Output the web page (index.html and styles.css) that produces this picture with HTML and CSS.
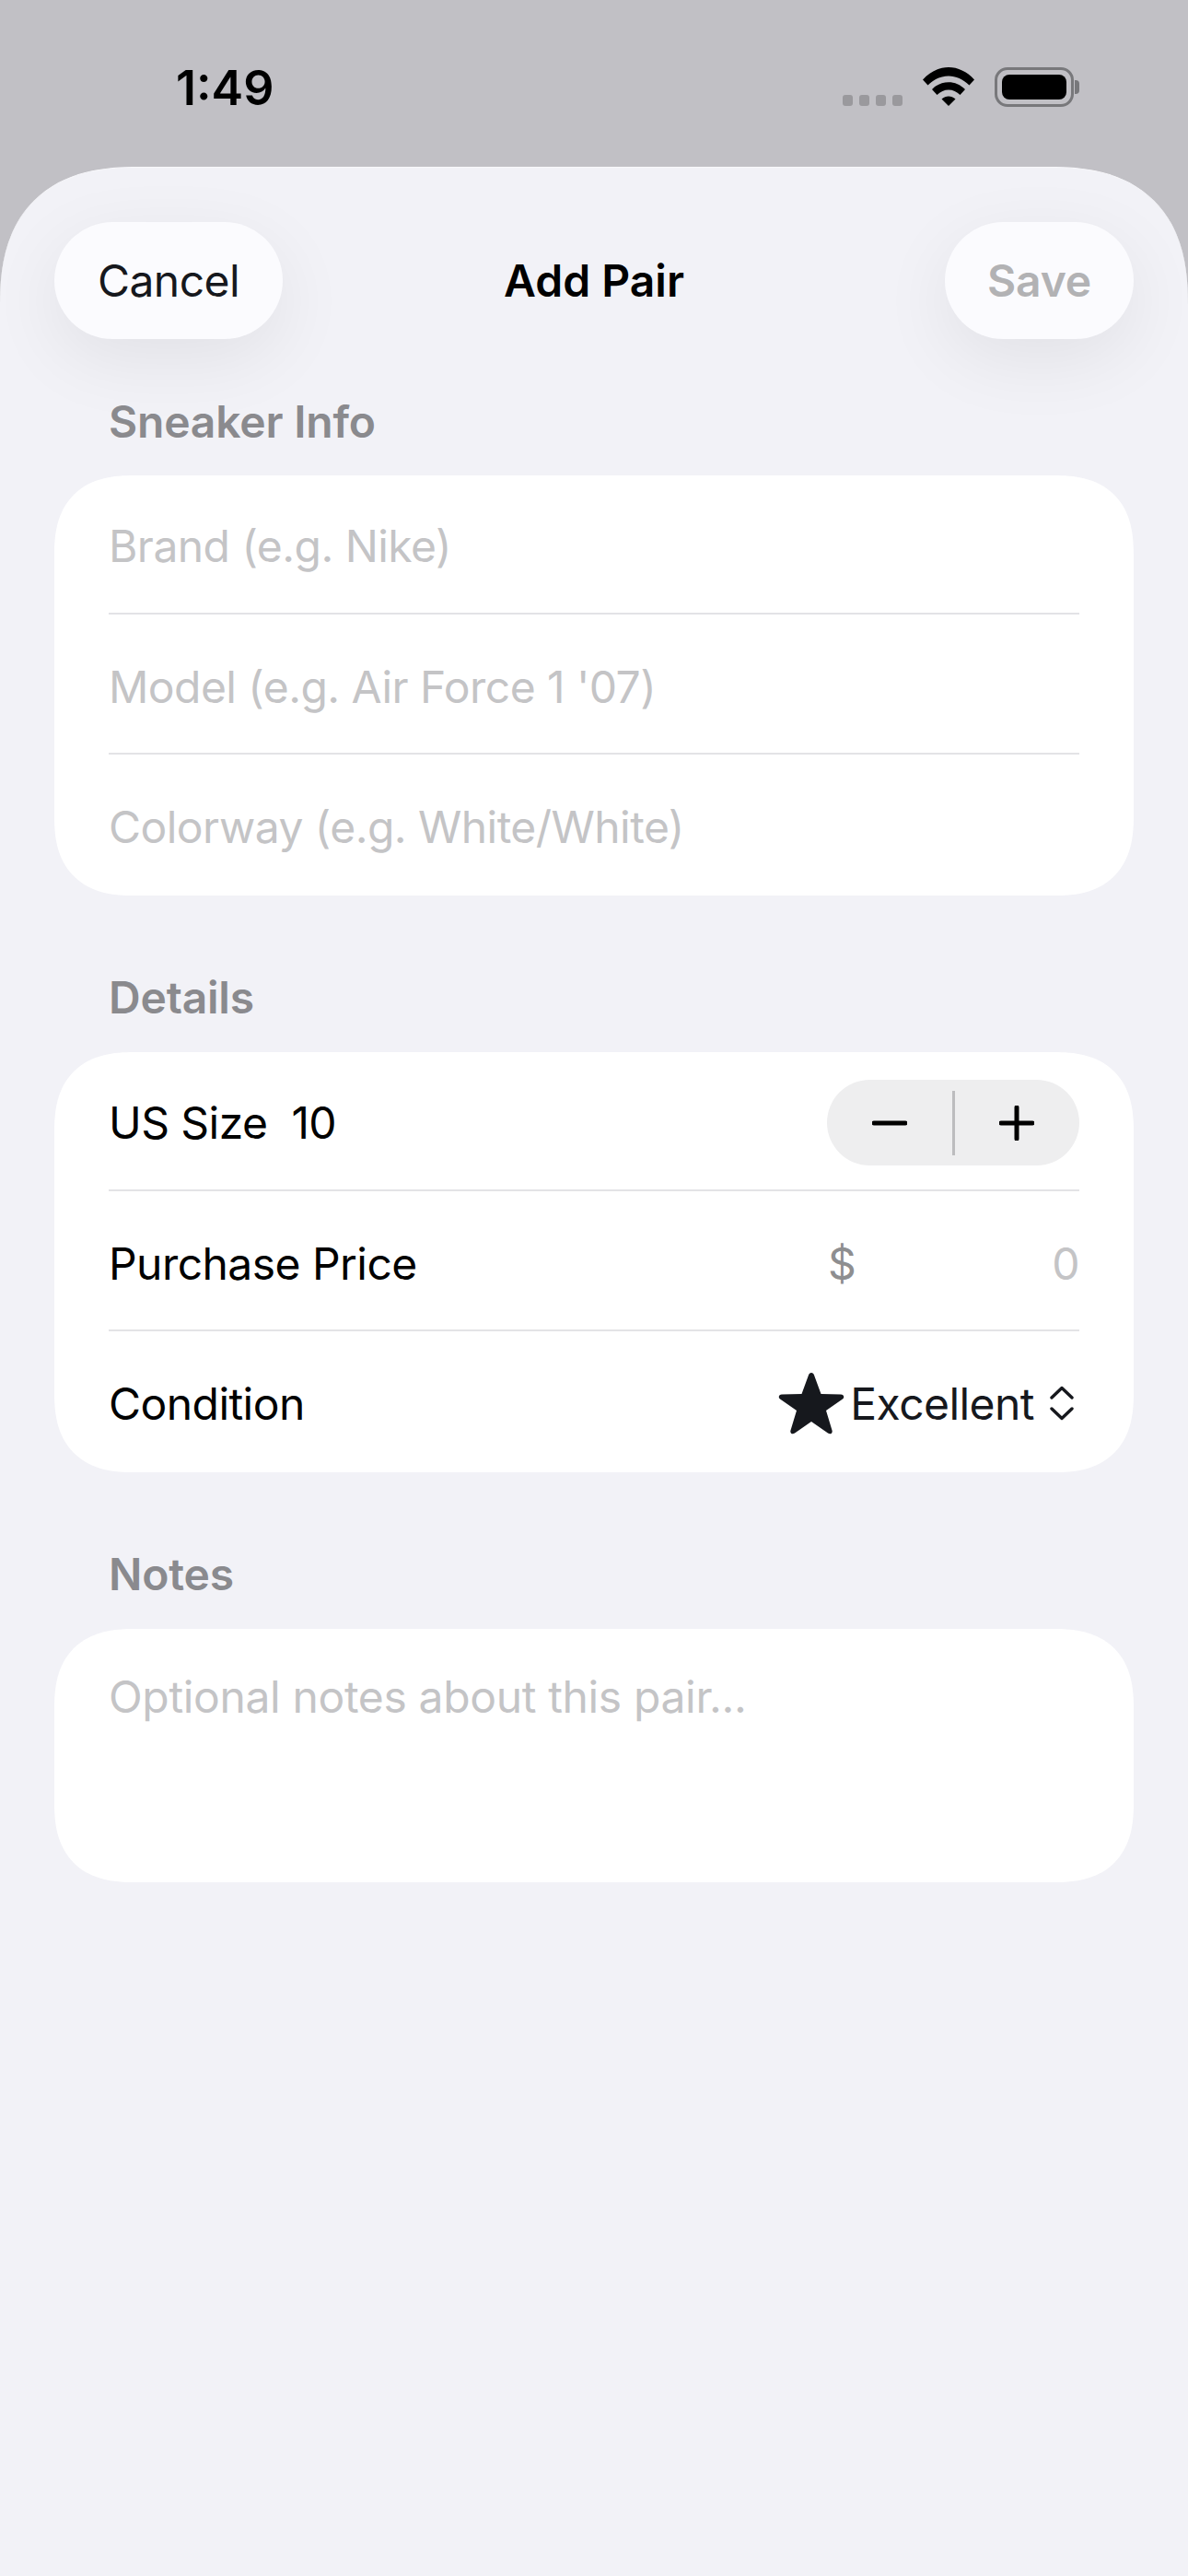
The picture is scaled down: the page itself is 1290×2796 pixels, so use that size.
FILE: index.html
```html
<!DOCTYPE html>
<html lang="en">
<head>
    <meta charset="UTF-8">
    <meta name="viewport" content="width=device-width, initial-scale=1.0">
    <title>Add Pair</title>
    <link rel="stylesheet" href="styles.css">
</head>
<body>
    <!-- Status bar -->
    <div class="status-bar">
        <span class="time">1:49</span>
        <div class="status-icons">
            <div class="signal"><i></i><i></i><i></i><i></i></div>
            <svg class="wifi" width="56" height="42" viewBox="0 0 56 42">
                <path d="M0 13.5 C16 -4.5 40 -4.5 56 13.5 L50.5 19.5 C37 6 19 6 5.500 19.500 Z" fill="#000"/>
                <path d="M10 24 C20 13.500 36 13.500 46 24 L40.500 30 C33.500 22.500 22.500 22.500 15.500 30 Z" fill="#000"/>
                <path d="M20.500 34.500 C25 30.500 31 30.500 35.500 34.500 L28 42 Z" fill="#000"/>
            </svg>
            <div class="battery"><div class="battery-body"><div class="battery-fill"></div></div><div class="battery-cap"></div></div>
        </div>
    </div>

    <div class="sheet">
        <!-- Nav -->
        <div class="nav">
            <div class="nav-btn cancel">Cancel</div>
            <div class="nav-title">Add Pair</div>
            <div class="nav-btn save">Save</div>
        </div>

        <!-- Sneaker Info -->
        <h2 class="section-title first">Sneaker Info</h2>
        <div class="card">
            <div class="row placeholder">Brand (e.g. Nike)</div>
            <div class="row placeholder">Model (e.g. Air Force 1 '07)</div>
            <div class="row placeholder">Colorway (e.g. White/White)</div>
        </div>

        <!-- Details -->
        <h2 class="section-title">Details</h2>
        <div class="card">
            <div class="row">
                <span class="size-label">US Size</span>
                <span class="size-value">10</span>
                <div class="stepper">
                    <div class="step">
                        <svg width="38" height="38" viewBox="0 0 38 38"><path d="M2 19 H36" class="step-line"/></svg>
                    </div>
                    <div class="step-divider"></div>
                    <div class="step">
                        <svg width="38" height="38" viewBox="0 0 38 38"><path d="M2 19 H36 M19 2 V36" class="step-line"/></svg>
                    </div>
                </div>
            </div>
            <div class="row">
                <span>Purchase Price</span>
                <div class="price">
                    <span class="dollar">$</span>
                    <span class="price-value">0</span>
                </div>
            </div>
            <div class="row">
                <span>Condition</span>
                <div class="picker">
                    <svg class="star" width="72" height="68" viewBox="0 0 72 68">
                        <path d="M36 1 C37.500 1 38.500 2 39 3.500 L46.500 24 L68 24.500 C71 24.500 72.500 27.500 70 29.500 L52 42 L58.500 63.500 C59.500 66.500 56.500 68.500 54 66.500 L36 54 L18 66.500 C15.500 68.500 12.500 66.500 13.500 63.500 L20 42 L2 29.500 C-.5 27.500 1 24.500 4 24.500 L25.500 24 L33 3.500 C33.500 2 34.500 1 36 1 Z" fill="#16181d"/>
                    </svg>
                    <span class="picker-value">Excellent</span>
                    <svg class="chevrons" width="26" height="38" viewBox="0 0 26 38">
                        <path d="M2 13 L13 2.500 L24 13 M2 25 L13 35.500 L24 25" fill="none" stroke="#16181d" stroke-width="3.400" stroke-linecap="round" stroke-linejoin="round"/>
                    </svg>
                </div>
            </div>
        </div>

        <!-- Notes -->
        <h2 class="section-title">Notes</h2>
        <div class="card notes">
            <span class="placeholder">Optional notes about this pair...</span>
        </div>
    </div>
</body>
</html>
```

FILE: styles.css
```css
* {
    box-sizing: border-box;
}
html, body {
    height: 100%;
}
body {
    margin: 0;
    display: flex;
    flex-direction: column;
    background-color: #c1c0c5;
    font-family: Inter, "Liberation Sans", sans-serif;
    font-size: 48px;
    letter-spacing: -0.55px;
    color: #000;
    overflow: hidden;
}

/* Status bar */
.status-bar {
    height: 181px;
    flex-shrink: 0;
    display: flex;
    justify-content: space-between;
    padding: 70px 118px 0 191px;
}
.time {
    font-size: 52px;
    font-weight: 600;
    line-height: 52px;
    height: 52px;
    letter-spacing: 0;
}
.status-icons {
    display: flex;
    align-items: flex-start;
    height: 44px;
    margin-top: 3px;
}
.signal {
    display: flex;
    gap: 7px;
    margin-top: 30px;
    margin-right: 22px;
}
.signal i {
    width: 11px;
    height: 12px;
    border-radius: 3px;
    background-color: #9a999d;
}
.wifi {
    margin-right: 22px;
}
.battery {
    display: flex;
    align-items: center;
}
.battery-body {
    width: 86px;
    height: 43px;
    padding: 5px;
    border: 3px solid #78787b;
    border-radius: 14px;
}
.battery-fill {
    width: 100%;
    height: 100%;
    background-color: #000;
    border-radius: 8px;
}
.battery-cap {
    width: 5px;
    height: 15px;
    margin-left: 1px;
    background-color: #78787b;
    border-radius: 0 4px 4px 0;
}

/* Sheet */
.sheet {
    flex: 1;
    padding: 59px 59px 0;
    background-color: #f2f2f7;
    border-radius: 125px 125px 0 0;
    border-top: 1px solid #f8f8fb;
}
.nav {
    display: grid;
    grid-template-columns: 1fr auto 1fr;
    align-items: center;
    height: 127px;
}
.nav-btn {
    height: 127px;
    display: flex;
    align-items: center;
    justify-content: center;
    border-radius: 64px;
    background-color: #fbfbfe;
    box-shadow: 0 22px 80px rgba(0, 0, 0, 0.07);
}
.cancel {
    width: 248px;
    color: #16181d;
}
.save {
    width: 205px;
    justify-self: end;
    color: #b2b2b4;
    font-weight: 600;
    letter-spacing: -0.2px;
}
.nav-title {
    font-weight: 600;
    letter-spacing: 0;
}

/* Sections */
.section-title {
    height: 60px;
    margin: 81px 59px 29px;
    font-size: 48px;
    font-weight: 600;
    line-height: 60px;
    color: #8a8a8e;
    letter-spacing: -0.2px;
}
.section-title.first {
    margin-top: 60px;
    margin-bottom: 28px;
}
.card {
    padding: 0 59px;
    background-color: #fff;
    border-radius: 72px;
}
.row {
    display: flex;
    align-items: center;
    border-bottom: 2px solid #e3e3e6;
}
.row:nth-child(1) {
    height: 151px;
    padding-top: 4px;
}
.row:nth-child(2) {
    height: 152px;
    padding-top: 7px;
}
.row:nth-child(3) {
    height: 153px;
    padding-top: 3px;
    border-bottom: none;
}
.placeholder {
    color: #c4c4c6;
}

/* continuous corners where the browser has them */
@supports (corner-shape: superellipse(1.3)) {
    .sheet {
        border-radius: 150px 150px 0 0;
        corner-shape: superellipse(1.3);
    }
    .card {
        border-radius: 86px;
        corner-shape: superellipse(1.3);
    }
}

/* Stepper */
.size-value {
    margin-left: 26px;
}
.stepper {
    width: 274px;
    height: 93px;
    margin-left: auto;
    display: flex;
    align-items: center;
    background-color: #eeeeef;
    border-radius: 47px;
}
.step {
    flex: 1;
    display: flex;
    justify-content: center;
}
.step-line {
    fill: none;
    stroke: #000;
    stroke-width: 5;
    stroke-linecap: round;
}
.step-divider {
    width: 3px;
    height: 70px;
    background-color: #bcbcbe;
}

/* Price */
.price {
    width: 273px;
    margin-left: auto;
    display: flex;
    justify-content: space-between;
}
.dollar {
    color: #8e8e90;
}
.price-value {
    color: #c4c4c6;
}

/* Condition picker */
.picker {
    margin-left: auto;
    margin-right: 6px;
    display: flex;
    align-items: center;
    color: #16181d;
}
.picker-value {
    margin: 0 17px 0 6px;
}

/* Notes */
.notes {
    height: 275px;
    padding-top: 44px;
    letter-spacing: -0.35px;
}
```
